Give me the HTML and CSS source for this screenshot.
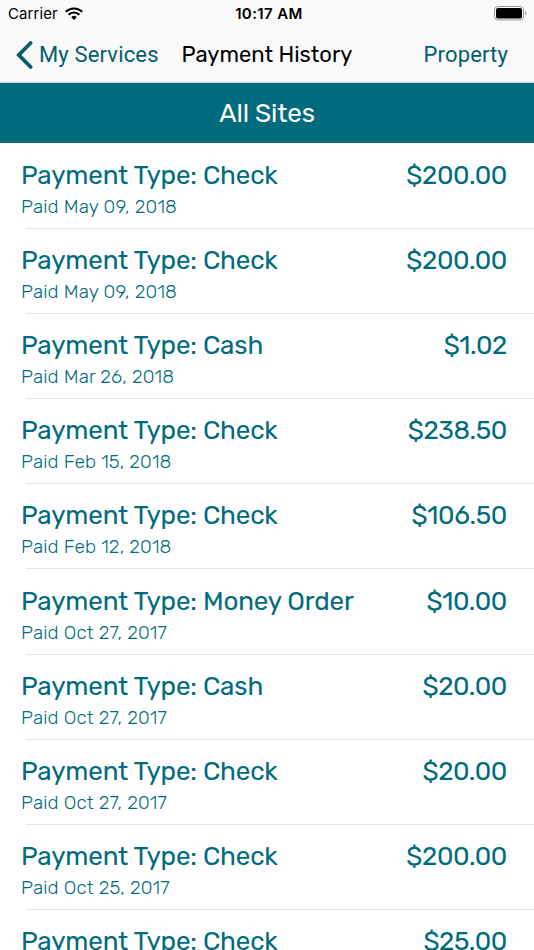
FILE: index.html
```html
<!DOCTYPE html>
<html lang="en">
<head>
    <meta charset="UTF-8">
    <meta name="viewport" content="width=device-width, initial-scale=1.0">
    <title>Payment History</title>
    <link rel="stylesheet" href="styles.css">
</head>
<body>
    <header>
        <div class="status-bar">
            <div class="carrier">
                <span class="carrier-name">Carrier</span>
                <svg width="18" height="13" viewBox="0 0 18 13">
                    <path d="M0.8 4.8A11.8 11.8 0 0 1 17.2 4.8" fill="none" stroke="#000" stroke-width="2.2"/>
                    <path d="M3.6 7.7A7.7 7.7 0 0 1 14.4 7.7" fill="none" stroke="#000" stroke-width="2.2"/>
                    <path d="M9 13L6.2 10.2A4 4 0 0 1 11.8 10.2Z"/>
                </svg>
            </div>
            <span class="time">10:17 AM</span>
            <svg class="battery" width="34" height="15" viewBox="0 0 34 15">
                <rect x="0.5" y="0.5" width="29" height="13.5" rx="3.5" fill="none" stroke="#999"/>
                <rect x="2" y="2" width="26" height="10.5" rx="1.8"/>
                <path d="M31.2 5Q34 7.2 31.2 9.4Z" fill="#999"/>
            </svg>
        </div>
        <nav class="nav-bar">
            <a class="back">
                <svg width="17" height="28" viewBox="0 0 17 28">
                    <path d="M14.6 2L2.8 14L14.6 26" fill="none" stroke="#045d6f" stroke-width="3.8" stroke-linecap="round"/>
                </svg>
                <span class="back-text">My Services</span>
            </a>
            <h1>Payment History</h1>
            <a class="property">Property</a>
        </nav>
    </header>
    <div class="site-bar"><span class="site-name">All Sites</span></div>
    <ul class="payments">
        <li><div class="row"><span class="type">Payment Type: Check</span><span class="amount">$200.00</span></div><span class="date">Paid May 09, 2018</span></li>
        <li><div class="row"><span class="type">Payment Type: Check</span><span class="amount">$200.00</span></div><span class="date">Paid May 09, 2018</span></li>
        <li><div class="row"><span class="type">Payment Type: Cash</span><span class="amount">$1.02</span></div><span class="date">Paid Mar 26, 2018</span></li>
        <li><div class="row"><span class="type">Payment Type: Check</span><span class="amount">$238.50</span></div><span class="date">Paid Feb 15, 2018</span></li>
        <li><div class="row"><span class="type">Payment Type: Check</span><span class="amount">$106.50</span></div><span class="date">Paid Feb 12, 2018</span></li>
        <li><div class="row"><span class="type">Payment Type: Money Order</span><span class="amount">$10.00</span></div><span class="date">Paid Oct 27, 2017</span></li>
        <li><div class="row"><span class="type">Payment Type: Cash</span><span class="amount">$20.00</span></div><span class="date">Paid Oct 27, 2017</span></li>
        <li><div class="row"><span class="type">Payment Type: Check</span><span class="amount">$20.00</span></div><span class="date">Paid Oct 27, 2017</span></li>
        <li><div class="row"><span class="type">Payment Type: Check</span><span class="amount">$200.00</span></div><span class="date">Paid Oct 25, 2017</span></li>
        <li><div class="row"><span class="type">Payment Type: Check</span><span class="amount">$25.00</span></div></li>
    </ul>
</body>
</html>
```
FILE: styles.css
```css
* {
    box-sizing: border-box;
}
body {
    margin: 0;
    height: 950px;
    overflow: hidden;
    background-color: #fff;
    color: #006b7d;
    font-family: Rubik, Roboto, sans-serif;
}
header {
    height: 83px;
    background-color: #f9f9f9;
    border-bottom: 1px solid #cfd3d4;
}
.status-bar {
    display: grid;
    grid-template-columns: 1fr auto 1fr;
    align-items: center;
    height: 27px;
    padding: 0 6px 0 8px;
    color: #000;
    font-family: Inter, sans-serif;
    font-size: 15px;
}
.carrier {
    display: flex;
    align-items: center;
    gap: 7px;
}
.carrier-name {
    letter-spacing: 0.1px;
}
.time {
    padding-left: 2px;
    font-weight: 600;
    letter-spacing: 0.4px;
}
.battery {
    justify-self: end;
}
.nav-bar {
    display: grid;
    grid-template-columns: 1fr auto 1fr;
    align-items: center;
    height: 55px;
    padding: 0 16px;
    font-size: 22px;
}
.back {
    display: flex;
    align-items: center;
    gap: 6px;
    color: #045d6f;
}
.back-text,
.property {
    font-family: Roboto, sans-serif;
    letter-spacing: 0.15px;
}
h1 {
    margin: 0;
    color: #000;
    font-size: 22px;
    font-weight: 400;
}
.property {
    justify-self: end;
    margin-right: 10px;
    color: #045d6f;
}
.site-bar {
    height: 60px;
    background-color: #006b7d;
    color: #fff;
    font-size: 26px;
    line-height: 61px;
    letter-spacing: -0.15px;
    text-align: center;
}
.payments {
    margin: 0;
    padding: 0;
    list-style: none;
}
.payments li {
    height: 85.12px;
    padding: 17px 27px 0 21px;
}
.payments li:not(:last-child)::after {
    content: "";
    display: block;
    height: 1px;
    margin: 6px -27px 0 5px;
    background-color: #e3e4e5;
}
.row {
    display: flex;
    justify-content: space-between;
    font-size: 26px;
    line-height: 32px;
    letter-spacing: -0.17px;
}
.amount {
    letter-spacing: -0.35px;
}
.date {
    display: block;
    font-size: 19px;
    font-weight: 300;
    line-height: 30px;
    letter-spacing: 0.13px;
}
```
